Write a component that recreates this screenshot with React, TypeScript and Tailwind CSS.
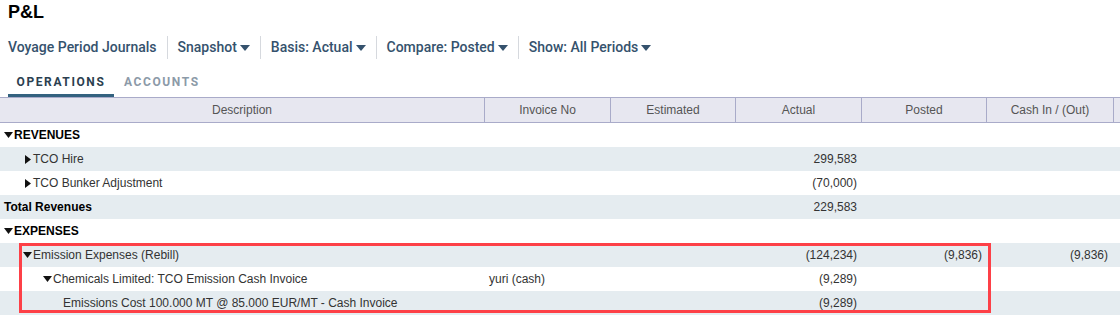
import React from "react";

const cols = "grid grid-cols-[485px_126px_125px_126px_125px_127px_1fr]";

function Caret() {
  return (
    <svg width="10" height="6" viewBox="0 0 10 6" className="ml-[3px] inline-block">
      <path d="M0 0 L10 0 L5 6 Z" fill="currentColor" />
    </svg>
  );
}

function Down() {
  return (
    <svg width="9" height="6" viewBox="0 0 9 6" className="inline-block mr-[1px]">
      <path d="M0 0 L9 0 L4.5 6 Z" fill="#111" />
    </svg>
  );
}

function Right() {
  return (
    <svg width="6" height="9" viewBox="0 0 6 9" className="inline-block mr-[2px]">
      <path d="M0 0 L6 4.5 L0 9 Z" fill="#111" />
    </svg>
  );
}

type Row = {
  indent: number;
  icon?: "down" | "right";
  label: string;
  bold?: boolean;
  inv?: string;
  actual?: string;
  posted?: string;
  cash?: string;
};

const rows: Row[] = [
  { indent: 4, icon: "down", label: "REVENUES", bold: true },
  { indent: 25, icon: "right", label: "TCO Hire", actual: "299,583" },
  { indent: 25, icon: "right", label: "TCO Bunker Adjustment", actual: "(70,000)" },
  { indent: 4, label: "Total Revenues", bold: true, actual: "229,583" },
  { indent: 4, icon: "down", label: "EXPENSES", bold: true },
  { indent: 23, icon: "down", label: "Emission Expenses (Rebill)", actual: "(124,234)", posted: "(9,836)", cash: "(9,836)" },
  { indent: 43, icon: "down", label: "Chemicals Limited: TCO Emission Cash Invoice", inv: "yuri (cash)", actual: "(9,289)" },
  { indent: 63, label: "Emissions Cost 100.000 MT @ 85.000 EUR/MT - Cash Invoice", actual: "(9,289)" },
];

export default function App() {
  return (
    <div className="relative w-[1120px] h-[318px] overflow-hidden bg-white font-['Liberation_Sans',Arial,sans-serif]">
      <div className="pt-[1px] pl-[8px] h-[23px] leading-[22px] text-[18px] font-bold text-black">P&amp;L</div>
      <div className="mt-[13px] flex h-[23px] items-center pl-[8px] text-[14px] text-[#35526d] font-['Roboto',sans-serif] font-medium">
        <div className="pr-[10px] h-full flex items-center">Voyage Period Journals</div>
        <div className="px-[10px] h-full flex items-center border-l border-[#d6d9de]">Snapshot<Caret /></div>
        <div className="px-[10px] h-full flex items-center border-l border-[#d6d9de]">Basis: Actual<Caret /></div>
        <div className="px-[10px] h-full flex items-center border-l border-[#d6d9de]">Compare: Posted<Caret /></div>
        <div className="px-[10px] h-full flex items-center border-l border-[#d6d9de]">Show: All Periods<Caret /></div>
      </div>
      <div className="mt-[12px] flex pl-[8px] h-[26px] text-[12px] tracking-[1.6px] font-bold font-['Roboto',sans-serif]">
        <div className="w-[106px] flex items-start justify-center pt-[2px] border-b-[3px] border-[#33627f] text-[#2b3f50]">OPERATIONS</div>
        <div className="px-[10px] pt-[2px] text-[#8c9aa8]">ACCOUNTS</div>
      </div>
      <div className={`${cols} h-[26px] bg-[#e7e7f0] border-y border-[#a9abc9] text-[12px] text-[#555]`}>
        {["Description", "Invoice No", "Estimated", "Actual", "Posted", "Cash In / (Out)", ""].map((h, i) => (
          <div key={i} className={`flex items-center justify-center ${i < 6 ? "border-r border-[#a9abc9]" : ""}`}>{h}</div>
        ))}
      </div>
      {rows.map((r, i) => (
        <div key={i} className={`${cols} h-[24px] text-[12px] text-[#333] ${i % 2 === 1 ? "bg-[#e5ecf0]" : "bg-white"}`}>
          <div className={`flex items-center whitespace-nowrap ${r.bold ? "text-black font-bold" : ""}`} style={{ paddingLeft: r.indent }}>
            {r.icon === "down" && <Down />}
            {r.icon === "right" && <Right />}
            <span>{r.label}</span>
          </div>
          <div className="flex items-center pl-[4px]">{r.inv}</div>
          <div />
          <div className="flex items-center justify-end pr-[5px]">{r.actual}</div>
          <div className="flex items-center justify-end pr-[5px]">{r.posted}</div>
          <div className="flex items-center justify-end pr-[6px]">{r.cash}</div>
          <div />
        </div>
      ))}
      <div className="absolute left-[19px] top-[243px] w-[972px] h-[70px] border-[3px] border-[#fd4047] pointer-events-none" />
    </div>
  );
}
